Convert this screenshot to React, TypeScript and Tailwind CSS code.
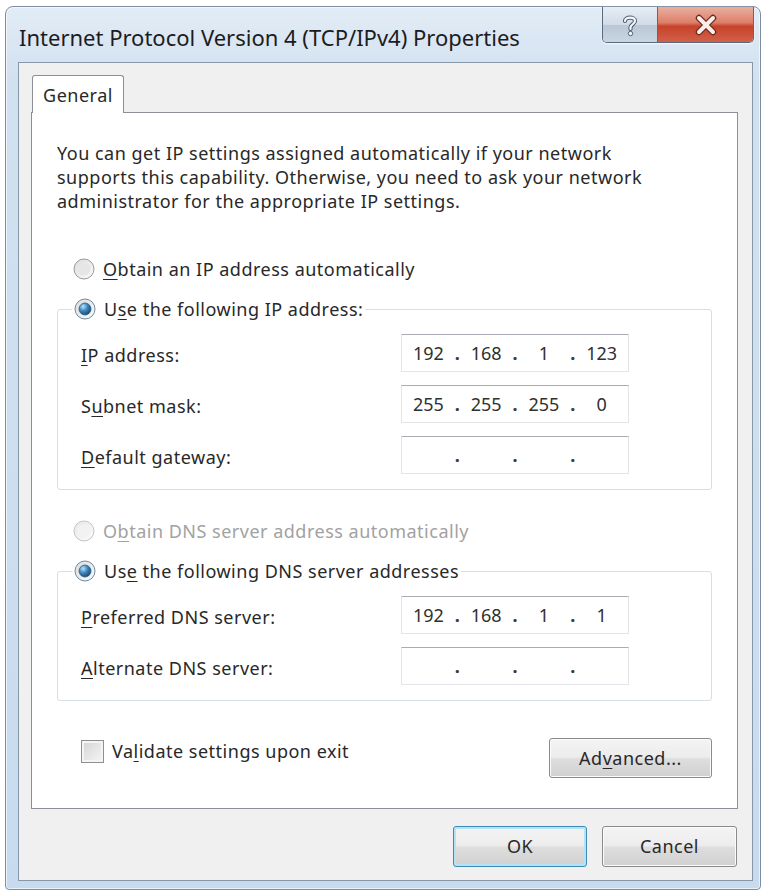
import type { ReactNode } from 'react';

const body = "font-['Noto_Sans',sans-serif] text-[18px] tracking-[0.5px] text-[#282828]";

// underlined access key letter
function K({ children }: { children: ReactNode }) {
  return <span className="underline decoration-1 underline-offset-[3px]">{children}</span>;
}

function Radio({ checked = false, disabled = false }: { checked?: boolean; disabled?: boolean }) {
  const id = checked ? 'rc' : disabled ? 'rd' : 'ru';
  return (
    <svg width="22" height="22" viewBox="0 0 22 22" className="shrink-0">
      <defs>
        <linearGradient id={`${id}-o`} x1="0" y1="0" x2="1" y2="1">
          <stop offset="0" stopColor={disabled ? '#e8e8e8' : '#dcdcdc'} />
          <stop offset="1" stopColor="#fbfbfb" />
        </linearGradient>
        <radialGradient id={`${id}-d`} cx="0.35" cy="0.3" r="0.8">
          <stop offset="0" stopColor="#b9e3fb" />
          <stop offset="0.45" stopColor="#3e86bd" />
          <stop offset="1" stopColor="#123f63" />
        </radialGradient>
      </defs>
      <circle cx="11" cy="11" r="10" fill={`url(#${id}-o)`} stroke={disabled ? '#c4c4c4' : checked ? '#6f8aa0' : '#9a9a9a'} />
      {checked ? (
        <circle cx="11" cy="11" r="6" fill={`url(#${id}-d)`} stroke="#2b5d86" strokeWidth="0.8" />
      ) : (
        <circle cx="11" cy="11" r="6.5" fill={disabled ? '#f2f2f2' : '#e6e6e6'} />
      )}
    </svg>
  );
}

function RadioLabel({ checked, disabled, children }: { checked?: boolean; disabled?: boolean; children: ReactNode }) {
  return (
    <div className={`flex h-[26px] items-center gap-[8px] ${disabled ? 'text-[#a2a2a2]' : ''}`}>
      <Radio checked={checked} disabled={disabled} />
      <span>{children}</span>
    </div>
  );
}

function IpField({ octets }: { octets: string[] }) {
  return (
    <div className="flex h-[38px] w-[228px] shrink-0 items-center border border-[#e3e5ea] border-t-[#a9acb3] bg-white tracking-normal">
      {octets.map((o, i) => (
        <div key={i} className="contents">
          {i > 0 && <span className="w-[5px] text-center font-bold text-[#3a3a3a]">.</span>}
          <span className="flex-1 text-center text-[#303030]">{o}</span>
        </div>
      ))}
    </div>
  );
}

function FieldRow({ label, octets }: { label: ReactNode; octets: string[] }) {
  return (
    <div className="flex items-center pr-[82px]">
      <span className="flex-1 pl-[23px] pt-[5px]">{label}</span>
      <IpField octets={octets} />
    </div>
  );
}

function Group({ legend, children }: { legend: ReactNode; children: ReactNode }) {
  return (
    <fieldset className="rounded-[3px] border border-[#d5dfe5] pb-[15px] pt-[12px]">
      <legend className="ml-[14px] bg-white px-[2px]">{legend}</legend>
      <div className="flex flex-col gap-[13px]">{children}</div>
    </fieldset>
  );
}

function Button({ children, primary = false, className = '' }: { children: ReactNode; primary?: boolean; className?: string }) {
  return (
    <button
      className={`flex items-center justify-center rounded-[3px] border bg-[linear-gradient(to_bottom,#f4f4f4_0%,#ececec_48%,#dedede_52%,#d0d0d0_100%)] ${
        primary ? 'border-[#3d8bb4] shadow-[inset_0_0_0_2px_#b7e1f5]' : 'border-[#8a8a8a] shadow-[inset_0_0_0_1px_#fbfbfb]'
      } ${className}`}
    >
      {children}
    </button>
  );
}

function TitleButtons() {
  return (
    <div className="flex h-[36px] overflow-hidden rounded-b-[5px] border border-t-0 border-[#5a6a7c] shadow-[0_1px_2px_rgba(255,255,255,0.8)]">
      <div className="flex w-[55px] items-center justify-center border-r border-[#5a6a7c] bg-[linear-gradient(to_bottom,#e6edf4_0%,#d2dce7_50%,#b9c7d6_52%,#c9d6e2_100%)]">
        <svg width="18" height="24" viewBox="0 0 18 24">
          <path
            d="M4 8 C4 3.5 14 3.5 14 8 C14 11 9.5 11.5 9.5 14.5 L9.5 16"
            fill="none"
            stroke="#4f5f70"
            strokeWidth="4.2"
            strokeLinecap="round"
          />
          <path
            d="M4 8 C4 3.5 14 3.5 14 8 C14 11 9.5 11.5 9.5 14.5 L9.5 16"
            fill="none"
            stroke="#f4f7fa"
            strokeWidth="2.2"
            strokeLinecap="round"
          />
          <circle cx="9.5" cy="20.5" r="2.2" fill="#f4f7fa" stroke="#4f5f70" strokeWidth="1" />
        </svg>
      </div>
      <div className="flex w-[95px] items-center justify-center bg-[linear-gradient(to_bottom,#eab0a2_0%,#dd7e68_45%,#c7422a_55%,#d2604a_100%)]">
        <svg width="24" height="22" viewBox="0 0 24 22">
          <path d="M5 4 L19 18 M19 4 L5 18" stroke="#6b2a1e" strokeWidth="6.5" strokeLinecap="round" />
          <path d="M5 4 L19 18 M19 4 L5 18" stroke="#fbeeea" strokeWidth="4" strokeLinecap="round" />
        </svg>
      </div>
    </div>
  );
}

export default function App() {
  return (
    <div className={`h-[895px] w-[768px] overflow-hidden bg-white pl-[5px] pt-[6px] ${body}`}>
      {/* window frame */}
      <div className="flex h-[884px] w-[756px] flex-col rounded-t-[8px] rounded-b-[4px] border border-[#7f8fa2] bg-[linear-gradient(to_bottom,#e2ecf6_0%,#d2e1f0_8%,#c8dbee_100%)] pb-[8px] pl-[12px] pr-[7px] shadow-[inset_0_0_0_1px_rgba(255,255,255,0.6)]">
        {/* title bar */}
        <div className="-ml-[12px] -mr-[7px] flex h-[55px] shrink-0 items-start justify-between pl-[13px] pr-[6px] tracking-normal">
          <span className="pt-[15px] text-[22px] leading-[30px] text-[#1c1c1c]">
            Internet Protocol Version 4 (TCP/IPv4) Properties
          </span>
          <TitleButtons />
        </div>

        {/* client area */}
        <div className="flex flex-1 flex-col border border-[#8796a8] bg-[#f0f0f0] pb-[12px] pl-[12px] pr-[14px] pt-[12px]">
          {/* tab strip */}
          <div className="flex h-[37px] shrink-0">
            <div className="relative z-10 -mb-px ml-[1px] flex w-[92px] items-center justify-center rounded-t-[3px] border border-b-0 border-[#8c8f97] bg-white pt-[2px]">
              General
            </div>
          </div>

          {/* tab page */}
          <div className="flex h-[697px] shrink-0 flex-col border border-[#8c8f97] bg-white px-[25px] pt-[28px]">
            <p className="leading-[24px]">
              You can get IP settings assigned automatically if your network
              <br />
              supports this capability. Otherwise, you need to ask your network
              <br />
              administrator for the appropriate IP settings.
            </p>

            <div className="ml-[16px] mt-[43px]">
              <RadioLabel>
                <K>O</K>btain an IP address automatically
              </RadioLabel>
            </div>

            <div className="mt-[14px]">
              <Group
                legend={
                  <RadioLabel checked>
                    U<K>s</K>e the following IP address:
                  </RadioLabel>
                }
              >
                <FieldRow label={<><K>I</K>P address:</>} octets={['192', '168', '1', '123']} />
                <FieldRow label={<>S<K>u</K>bnet mask:</>} octets={['255', '255', '255', '0']} />
                <FieldRow label={<><K>D</K>efault gateway:</>} octets={['', '', '', '']} />
              </Group>
            </div>

            <div className="ml-[16px] mt-[28px]">
              <RadioLabel disabled>
                O<K>b</K>tain DNS server address automatically
              </RadioLabel>
            </div>

            <div className="mt-[14px]">
              <Group
                legend={
                  <RadioLabel checked>
                    Us<K>e</K> the following DNS server addresses
                  </RadioLabel>
                }
              >
                <FieldRow label={<><K>P</K>referred DNS server:</>} octets={['192', '168', '1', '1']} />
                <FieldRow label={<><K>A</K>lternate DNS server:</>} octets={['', '', '', '']} />
              </Group>
            </div>

            <div className="mt-[37px] flex items-start justify-between">
              <label className="ml-[24px] flex items-center gap-[8px]">
                <span className="h-[23px] w-[23px] border border-[#8e8f8f] bg-[linear-gradient(135deg,#d4d4d4_0%,#f6f6f6_100%)] shadow-[inset_0_0_0_2px_#f4f4f4]" />
                <span>
                  Va<K>l</K>idate settings upon exit
                </span>
              </label>
              <Button className="h-[40px] w-[163px]">
                Ad<K>v</K>anced...
              </Button>
            </div>
          </div>

          {/* dialog buttons */}
          <div className="mt-[17px] flex justify-end gap-[15px] pr-[1px]">
            <Button primary className="h-[41px] w-[134px]">
              OK
            </Button>
            <Button className="h-[41px] w-[135px]">Cancel</Button>
          </div>
        </div>
      </div>
    </div>
  );
}
